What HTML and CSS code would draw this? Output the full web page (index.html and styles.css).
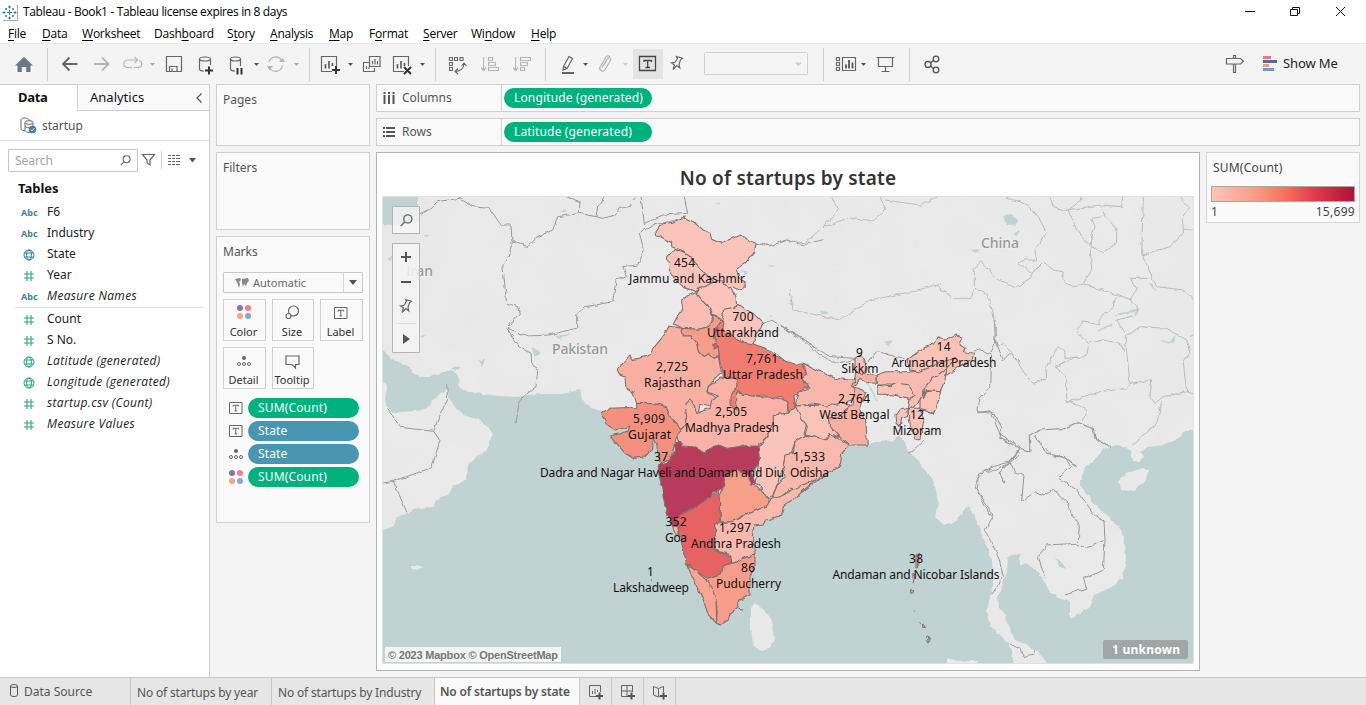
FILE: index.html
```html
<!DOCTYPE html>
<html lang="en">
<head>
<meta charset="utf-8">
<title>Tableau - Book1</title>
<link rel="stylesheet" href="styles.css">
</head>
<body>
<svg class="defs" width="0" height="0">
  <defs>
    <symbol id="globe" viewBox="0 0 12 12"><g fill="none" stroke="currentColor" stroke-width="1"><circle cx="6" cy="6" r="5"/><ellipse cx="6" cy="6" rx="2.4" ry="5"/><path d="M1.4 4h9.2M1.4 8h9.2"/></g></symbol>
    <symbol id="hash" viewBox="0 0 12 12"><path d="M4 1v10M8 1v10M1 4h10M1 8h10" fill="none" stroke="currentColor" stroke-width="1.1"/></symbol>
    <symbol id="tbox" viewBox="0 0 14 12"><path d="M.5.5h12.5v11H.5zM4 4.5V3.3h5.6v1.2M6.8 3.3v5.6M5.4 8.9h2.8" fill="none" stroke="#666"/></symbol>
    <symbol id="dots" viewBox="0 0 14 14"><circle cx="3" cy="3" r="3" fill="#8a739b"/><circle cx="11" cy="3" r="3" fill="#fa7a8c"/><circle cx="3" cy="11" r="3" fill="#f3a683"/><circle cx="11" cy="11" r="3" fill="#84a7cf"/></symbol>
    <symbol id="detail" viewBox="0 0 14 12"><circle cx="7" cy="3" r="2" fill="#666"/><g fill="none" stroke="#666"><circle cx="2" cy="9" r="1.5"/><circle cx="7" cy="9" r="1.5"/><circle cx="12" cy="9" r="1.5"/></g></symbol>
    <symbol id="lens" viewBox="0 0 12 12"><g fill="none" stroke="#666" stroke-width="1.2"><circle cx="7.2" cy="4.6" r="3.8"/><path d="M4.4 7.4L.8 11"/></g></symbol>
    <symbol id="pin" viewBox="0 0 14 16"><path d="M6.500 1.500l6 1.800-2 1.500-1.500 4.500.8 3.700-3-2.500L3 14.500 4.500 10 1.500 7.800l3.500-.5 2.500-4z" fill="none" stroke="#666" stroke-width="1.200"/></symbol>
  </defs>
</svg>

<header class="titlebar">
  <svg class="logo" width="16" height="17" viewBox="0 0 16 17"><path d="M15.500 1v15.500H1" fill="none" stroke="#aaa"/><g stroke="#2f7fae" stroke-width="1"><path d="M7.500 6v5M5 8.500h5M7.500 1.500v3M6 3h3M7.500 12.500v3M6 14h3M.5 8.500h3M2 7v3M11.500 8.500h3M13 7v3M4 4v2M3 5h2M11 4v2M10 5h2M4 11v2M3 12h2M11 11v2M10 12h2"/></g></svg>
  <span class="apptitle">Tableau - Book1 - Tableau license expires in 8 days</span>
  <svg class="winbtns" width="130" height="22" viewBox="1236 0 130 22"><g fill="none" stroke="#111"><path d="M1245 10.500h10M1290.500 8.500h7v6h-7zM1292.500 8V6.500h7v6H1298M1336 6l9 9M1345 6l-9 9"/></g></svg>
</header>
<nav class="menubar">
  <span style="width:34px"><u>F</u>ile</span><span style="width:40px"><u>D</u>ata</span><span style="width:72px"><u>W</u>orksheet</span><span style="width:73px">Dash<u>b</u>oard</span><span style="width:43px">S<u>t</u>ory</span><span style="width:59px"><u>A</u>nalysis</span><span style="width:40px"><u>M</u>ap</span><span style="width:54px">F<u>o</u>rmat</span><span style="width:48px"><u>S</u>erver</span><span style="width:60px">Wi<u>n</u>dow</span><span><u>H</u>elp</span>
</nav>

<div class="toolbar">
  <svg width="47" height="37" viewBox="0 44 47 37"><path d="M24 57l9 8.500h-2.500V72h-4.300v-5h-4.400v5h-4.300v-6.500H15z" fill="#6b7784"/></svg>
  <svg class="grp" width="262" height="37" viewBox="47 44 262 37">
    <g fill="none" stroke="#666" stroke-width="1.800"><path d="M77.500 64H63M69.500 57.500L63 64l6.500 6.500"/><path stroke="#b5b5b5" d="M94 64h14.500M102 57.500l6.500 6.500-6.500 6.500"/></g>
    <g fill="none" stroke="#b5b5b5" stroke-width="1.200"><path d="M132 67.500h-5a3.800 3.800 0 0 1 0-7.500h10M134.500 57l3 3-3 3M139 60.500a3.500 3.500 0 0 1-1.500 7h-4"/><path d="M269 62a7 7 0 0 1 12.500-2M282.500 65.500a7 7 0 0 1-12.500 3"/></g>
    <path d="M279 62h6l-2.500-4zM267 66h6l-3.500 4.500z" fill="#b5b5b5"/>
    <path d="M150 63h5l-2.500 3zM294 63h5l-2.500 3z" fill="#aaa"/><path d="M254 63h5l-2.500 3z" fill="#555"/>
    <g fill="none" stroke="#666" stroke-width="1.200"><path d="M166.500 56.500h15v15h-15zM169.500 71v-4.500h7.500V71M172 68.500V71"/><path d="M199.500 59v10c0 1.200 2 2 4.500 2M210.500 59v6M230.500 59v10c0 1.200 2 2 4.500 2M240.500 59v7"/><ellipse cx="205" cy="59" rx="5.500" ry="2"/><ellipse cx="235.500" cy="59" rx="5" ry="2"/></g>
    <path d="M205 70.500h8M209 66.500v8M237.500 68v6.500M241.500 68v6.500" stroke="#333" stroke-width="2"/>
  </svg>
  <svg class="grp" width="126" height="37" viewBox="309 44 126 37">
    <g fill="none" stroke="#666" stroke-width="1.200"><path d="M332 71.500h-10.500v-15h15V66M404 71.500h-10.500v-15h15V66M369 62.500h-5.500v9h11V68M369.500 56.500h10.500v10h-10.500z"/></g>
    <path d="M325.500 64v4.500M329 61v7.500M332.500 63v3M397.500 64v4.500M401 61v7.500M404.500 63v3" stroke="#555" stroke-width="1.600"/><path d="M366.500 66v3M369 67v2M372.500 61v3.500M375 59v5.500M377.500 61v3.500" stroke="#666" stroke-width="1.200"/>
    <path d="M332 70h8M336 66v8M404 67l7 7M411 67l-7 7" stroke="#333" stroke-width="2"/>
    <path d="M348 63h5l-2.500 3zM420 63h5l-2.500 3z" fill="#555"/>
  </svg>
  <svg class="grp" width="110" height="37" viewBox="435 44 110 37">
    <g fill="none" stroke="#666" stroke-width="1.100"><path d="M449.500 57.500h3v3h-3zM454.500 57.500h3v3h-3zM460 57.500h3v3h-3zM449.500 62.500h3v3h-3zM449.500 67.500h3v3h-3zM464 63.500c0 5-4 8-9 8M461.500 66l2.500-3 2.500 3M458 68.500l-3 3 3 2.500"/></g>
    <g fill="none" stroke="#b5b5b5" stroke-width="1.200"><path d="M483.500 57v13M481 67.500l2.500 3 2.500-3M488.500 57.500h4v3h-4zM488.500 62.500h7v3h-7zM488.500 67.500h10v3h-10zM515.500 57v13M513 67.500l2.500 3 2.500-3M520.500 57.500h10v3h-10zM520.500 62.500h7v3h-7zM520.500 67.500h4v3h-4z"/></g>
  </svg>
  <svg class="grp" width="278" height="37" viewBox="545 44 278 37">
    <path d="M633 49h30v30h-30z" fill="#e3e3e3"/>
    <g fill="none" stroke="#666" stroke-width="1.200"><path d="M569 56.500l3.500 2-5.500 10-3.500-2zM563.500 66.500l-.5 3.500 4-1.500"/><path d="M562 73h12" stroke-width="2"/><path stroke="#b5b5b5" d="M602 67.500l5.500-9a1.700 1.700 0 0 1 3 2l-5.500 9a2.800 2.800 0 0 1-5-2.500l5.500-9a2.500 2.500 0 0 1 4.500-1M604 65l3-5"/></g>
    <g fill="none" stroke="#444" stroke-width="1.300"><path d="M639.500 56.500h16v14h-16zM644 62v-1.500h7.500V62M647.700 60.500v7M645.500 67.500h4.500"/></g>
    <use href="#pin" x="670" y="55" width="14" height="16"/>
    <rect x="704.500" y="52.500" width="103" height="22" rx="1" fill="#f5f5f5" stroke="#d0d0d0"/>
    <path d="M583 63h5l-2.500 3z" fill="#555"/><path d="M623 63h5l-2.500 3zM795 62.500h7l-3.500 4z" fill="#ccc"/>
  </svg>
  <svg class="grp" width="86" height="37" viewBox="823 44 86 37">
    <g fill="none" stroke="#666" stroke-width="1.200"><path d="M836.500 57.500h3v3h-3zM836.500 62.500h3v3h-3zM836.500 67.500h3v3h-3zM842.500 57.500h13v13h-13zM876.500 57.500h18M878.500 58v8.500h14V58M885.500 66.500V71M881.500 71.500h8"/></g>
    <path d="M846 64.500v4M849 60v8.500M852.500 62.500v6" stroke="#555" stroke-width="1.800"/><path d="M861 63h5l-2.500 3z" fill="#555"/>
  </svg>
  <svg class="grp" width="40" height="37" viewBox="909 44 40 37"><g fill="none" stroke="#555" stroke-width="1.300"><circle cx="928" cy="64.500" r="3"/><circle cx="936" cy="59" r="2.800"/><circle cx="936" cy="70" r="2.800"/><path d="M930.500 63l3-2.500M930.500 66l3 2.500"/></g></svg>
  <div class="showme">
    <svg width="56" height="37" viewBox="1224 44 56 37"><path d="M1226.500 58.500h14l3 2.700-3 2.800h-14zM1233.500 58v-2.500h2v2.500M1233.500 64v8.500h2V64" fill="none" stroke="#666" stroke-width="1.200"/><path d="M1263 56h8v3h-8z" fill="#e8798a"/><path d="M1263 60h14v3h-14z" fill="#5b6591"/><path d="M1263 64h6v3h-6z" fill="#f0a06c"/><path d="M1263 68h11v3h-11z" fill="#6b9bd1"/></svg>
    <span>Show Me</span>
  </div>
</div>

<main class="work">
  <aside class="side">
    <div class="sidetabs"><b>Data</b><div><span>Analytics</span><svg width="8" height="12" viewBox="0 0 8 12"><path d="M6.500 1.500L2 6l4.500 4.500" fill="none" stroke="#555" stroke-width="1.200"/></svg></div></div>
    <div class="source"><svg width="17" height="17" viewBox="0 0 17 17"><g fill="none" stroke="#666"><path d="M1 3v8.500C1 13 3 13.500 5 14M9.500 3.500C9 .2 1 .2 1 3M5 6v7c0 2 4 3 6 2M13 6v3"/><ellipse cx="9" cy="5.500" rx="4" ry="1.800"/><path d="M5 9c1 2 4 2 6 1"/></g><circle cx="12.500" cy="12.500" r="3.800" fill="#3a80a8"/><path d="M10.700 12.500l1.300 1.300 2.300-2.500" fill="none" stroke="#fff"/></svg><span>startup</span></div>
    <div class="searchrow"><div class="search"><span>Search</span><svg width="11" height="11"><use href="#lens"/></svg></div>
      <svg width="62" height="22" viewBox="140 149 62 22"><path d="M142.500 154.500h12l-4.500 5.500v5l-3-2v-3z" fill="none" stroke="#666" stroke-width="1.200"/><path d="M161.500 151v18" stroke="#ccc"/><path d="M168 155.500h3m1 0h3m1 0h4M168 158.500h3m1 0h3m1 0h4M168 161.500h3m1 0h3m1 0h4M168 164.500h3m1 0h3m1 0h4" stroke="#666"/><path d="M189 158h7l-3.500 4.500z" fill="#555"/></svg></div>
    <h2>Tables</h2>
    <ul class="fields">
      <li><em class="abc">Abc</em>F6</li><li><em class="abc">Abc</em>Industry</li>
      <li><svg class="dim"><use href="#globe"/></svg>State</li>
      <li><svg class="mea"><use href="#hash"/></svg>Year</li>
      <li><em class="abc">Abc</em><i>Measure Names</i></li>
    </ul>
    <ul class="fields second">
      <li><svg class="mea"><use href="#hash"/></svg>Count</li><li><svg class="mea"><use href="#hash"/></svg>S No.</li>
      <li><svg class="mea"><use href="#globe"/></svg><i>Latitude (generated)</i></li>
      <li><svg class="mea"><use href="#globe"/></svg><i>Longitude (generated)</i></li>
      <li><svg class="mea"><use href="#hash"/></svg><i>startup.csv (Count)</i></li>
      <li><svg class="mea"><use href="#hash"/></svg><i>Measure Values</i></li>
    </ul>
  </aside>

  <section class="cards">
    <div class="card pages">Pages</div>
    <div class="card filters">Filters</div>
    <div class="card marks">Marks
      <div class="marktype"><svg width="14" height="10" viewBox="0 0 14 10"><path d="M0 1l5-1 1 2-2 2 1 2-1 4-1-3-1-3zM7 1l6-1 1 3-2 2-1 3-2-2-1 3-1-4z" fill="#888"/></svg><span>Automatic</span><div><svg width="8" height="5"><path d="M0 0h8L4 5z" fill="#555"/></svg></div></div>
      <div class="btns">
        <div><svg width="14" height="14"><use href="#dots"/></svg>Color</div>
        <div><svg width="15" height="15" viewBox="0 0 15 15"><g fill="none" stroke="#666" stroke-width="1.200"><circle cx="8.500" cy="6" r="5"/><circle cx="3.500" cy="11" r="2.500" fill="#fafafa"/></g></svg>Size</div>
        <div><svg class="low" width="14" height="12"><use href="#tbox"/></svg>Label</div>
        <div><svg class="low" width="14" height="12"><use href="#detail"/></svg>Detail</div>
        <div><svg class="low" width="15" height="14" viewBox="0 0 15 14"><path d="M1 1h13v8.500h-3.500v3.500L7 9.500H1z" fill="none" stroke="#666" stroke-width="1.200"/></svg>Tooltip</div>
      </div>
      <div class="pills">
        <div><svg width="14" height="12"><use href="#tbox"/></svg><span class="pill g">SUM(Count)</span></div>
        <div><svg width="14" height="12"><use href="#tbox"/></svg><span class="pill b">State</span></div>
        <div><svg width="14" height="12"><use href="#detail"/></svg><span class="pill b">State</span></div>
        <div><svg width="14" height="14"><use href="#dots"/></svg><span class="pill g">SUM(Count)</span></div>
      </div>
    </div>
  </section>

  <section class="content">
    <div class="shelf"><div class="shelfname"><svg width="12" height="12"><path d="M1.500 0v2m0 1v9M6 0v2m0 1v9M10.500 0v2m0 1v9" stroke="#555" stroke-width="2"/></svg>Columns</div><span class="pill g wide">Longitude (generated)</span></div>
    <div class="shelf"><div class="shelfname"><svg width="12" height="12"><path d="M0 2h2m1 0h9M0 6h2m1 0h9M0 10h2m1 0h9" stroke="#555" stroke-width="1.800"/></svg>Rows</div><span class="pill g wide">Latitude (generated)</span></div>
    <div class="lower">
      <div class="view">
        <h1>No of startups by state</h1>
        <svg class="map" width="812" height="468" viewBox="382 196 812 468">
          <defs>
            <filter id="rough" x="382" y="196" width="812" height="468" filterUnits="userSpaceOnUse"><feTurbulence type="fractalNoise" baseFrequency=".17" numOctaves="1" seed="4"/><feDisplacementMap in="SourceGraphic" scale="4.500" xChannelSelector="R" yChannelSelector="G"/></filter>
            <filter id="relief" x="382" y="196" width="812" height="468" filterUnits="userSpaceOnUse"><feTurbulence type="fractalNoise" baseFrequency=".02" numOctaves="2" seed="8"/><feColorMatrix values="0 0 0 0 .5  0 0 0 0 .5  0 0 0 0 .5  .5 0 0 0 -.2"/></filter>
          </defs>
          <rect x="382" y="196" width="812" height="468" fill="#eaeaea"/>
          <rect x="382" y="196" width="812" height="468" filter="url(#relief)" opacity=".22"/>
          <g filter="url(#rough)">
            <g fill="#c1d2d2">
              <path d="M375 190H418V222L400 226 375 223zM375 350L384 352 392 359 408 366 412 370 414 374 427 378 443 372 452 370 458 375 459 386 463 390 475 393 500 396 516 397 540 394 562 394 580 390 582 400 592 408 602 411 636 407 665 430 690 470 710 520 740 520 770 480 820 450 855 440 868 444 885 440 893 442 900 434 905 444 909 452 916 458 925 470 932 478 936 490 938 503 935 517 943 524 952 524 960 515 968 505 974 515 980 530 986 545 992 560 993 580 991 595 986 612 990 625 1003 638 1012 650 1014 670H375V533L395 526 395 521 400 516 408 513 419 508 434 507 436 500 449 495 453 486 466 480 467 465 475 458 487 450 493 434 489 428 480 420 466 416 455 407 449 398 447 388 437 396 427 408 417 411 400 412 392 413 386 405 387 385 375 376z"/>
              <path d="M1049 670L1043 656 1035 650 1025 644 1015 640 1010 628 1005 615 999 608 998 597 1003 583 1007 572 1008 558 1013 554 1020 555 1020 564 1030 565 1038 572 1043 580 1050 592 1058 598 1070 602 1070 618 1077 615 1088 608 1094 595 1110 588 1123 577 1126 560 1125 545 1121 530 1108 516 1095 505 1083 490 1080 482 1085 468 1098 457 1104 448 1118 445 1130 450 1132 462 1141 462 1143 455 1140 452 1148 447 1165 445 1180 437 1186 430 1200 430V670z"/>
              <path d="M1003 216l7-2 8 6-3 6-8-2zM970 250l10-1-4 4zM1014 233l6-2-3 5zM560 212l6-3-1 4zM387 259l6-5-2 7zM424 235h6l-4 2zM504 290l5 1-3 3zM555 336l16-2-11 5zM532 347l8 5-6 4zM479 361l6-1-3 8zM450 367l10 1-4 3zM420 336l5-1-2 4zM740 270l10 2-5 2zM769 265l6 1-4 1zM788 302l7 2-4 1zM820 310l8 3-6 2zM769 315l5 1-3 1zM884 342l9-3-3 7zM1160 340l10 2 6-8-2 8-8 2zM1055 558l8 6 3 5-7-3z"/>
              <path d="M1116 315l23-5M1098 331l14-7M1150 283l5 8M859 375l10 10 8 16" fill="none" stroke="#c1d2d2" stroke-width="1.500"/>
              <path d="M386 399l6 5 5-4-8-4zM715 202l6 1-3 2z"/>
            </g>
            <g fill="#e9e9e9">
              <path d="M751 608l4-5 8 5 9 12 3 18-4 9-10 3-8-5-2-17z"/>
              <path d="M1119 482l7-9 15-4 8 1-5 13-11 8-12-1zM947 658l12 3 13-1 10 4h-35zM411 566h12l-4 4-8-1zM412 370l18-1 12 1-16 5z"/>
            </g>
            <g fill="none" stroke="#b8b8b8" stroke-width=".9">
              <g transform="translate(940 190) scale(.33333)" stroke-width="2.800">
                <path d="M200 25L240 35 270 50 300 90 318 125 305 150 285 180 290 210 250 210 235 220 260 240 275 250 310 215 340 240 365 245 375 275 400 290 430 285 490 300 530 315 520 350 490 375 475 405 430 392 412 425 445 460 490 450 540 460 555 485M103 290L103 235 122 215 145 235 165 265 230 290 270 265 290 230M-20 280L40 325 90 325 105 295 140 310 160 370 170 470 190 460 210 480 260 560 280 580 320 565 318 530 355 470 375 485 375 505 440 500 445 470M345 530L380 560 380 630 440 660 430 690M345 530L410 500M380 635L440 620 480 605 560 595 570 580 555 440 600 410 680 415 740 450 750 490 730 520 740 605 670 620 645 640 630 620 635 570 570 580M665 635L650 700 580 765M385 60L410 120 450 165 455 240 430 280M380 60L480 45 495 80 530 115 530 160 490 185 455 170M485 45L545 50 548 20M330 25L340 50 380 62M425 0L425 30 385 60M455 85L465 110 455 140 450 165M455 85L490 80M610 20L605 190 640 270 650 290 730 300 760 330M605 195L690 170 730 130 728 90 745 50 720 20M730 118L760 120M570 265L630 265M570 265L590 295 570 330 595 350 590 375 530 390 560 435M530 312L575 330M750 440L770 430M740 605L770 615"/>
              </g>
              <path d="M757 244L772 245 786 240 805 243 823 227 838 211 832 197M823 227L850 218 872 222 886 210 880 197M790 290L793 310 840 320 870 300 910 292 940 284M885 200L920 205 936 197"/>
            </g>
            <g fill="none" stroke="#999" stroke-width="1">
              <g transform="translate(376 80) scale(.33333)" stroke-width="3">
                <path d="M130 402L160 388 185 365 250 355 290 380 340 385 375 435 405 435 408 485 400 530 380 555 385 600 392 670 425 680 430 700 393 745 455 768 520 765 570 752 602 745 602 705 625 680 660 675 710 665 720 600 755 590 740 560 785 555 805 510 790 460 830 435 880 425 930 410M408 485L455 500 480 475 530 450 545 410 610 400 660 410 680 415 720 405 730 385 760 380 780 350M610 400L612 365 570 350M660 410L665 380 685 350M795 350L805 430 860 405 935 400 925 350M393 745L425 795 465 820 468 860 485 870 480 920M480 920L430 960 420 1030"/>
              </g>
              <g transform="translate(376 370) scale(.33333)" stroke-width="3"><path d="M35 118L75 172 173 184 195 125 215 90 212 40M173 184L192 212 167 293 52 334 15 340M52 334L94 430"/></g>
              <g transform="translate(590 200) scale(.33333)" stroke-width="3"><path d="M520 370L545 360 600 395 650 430 690 465 740 490 795 478M498 130L540 138 590 120 640 135 700 118"/><path d="M570 375L630 410 680 445"/></g>
              <g transform="translate(780 320) scale(.33333)" stroke-width="3"><path d="M0 15L60 50 110 85 150 110 225 115M258 130L290 95 340 105 385 122M580 95L600 85 615 98 635 105 632 200 600 235 592 275 635 280 660 345 720 380M720 388L690 425 640 440 600 460 585 500 635 595M645 0L645 60 630 100M645 60L670 120 690 100 720 130M432 360L400 390 385 400"/></g>
              <g transform="translate(940 190) scale(.33333)" stroke-width="3.500"><path d="M112 668L155 662 185 710 180 745 240 775 270 785 268 735 300 720 380 715 415 698 460 715 465 745 512 770M285 735L320 790 380 805 410 830M240 775L210 810 180 850 195 880"/></g>
              <g transform="translate(820 450) scale(.33333)" stroke-width="3"><path d="M470 118L480 80 490 65 530 60 570 38 600 10 590 0M570 38L585 70 612 75 605 155 645 125 670 138 700 118 745 160 755 195 778 225 775 275M470 118L510 180 518 205 495 240 520 290 535 320 550 380 515 435M680 0L700 20 735 20 752 50 715 82 770 120 820 190 852 215 855 270 850 360 790 385 800 415 735 435M675 385L655 320 680 285 770 280 795 295 850 272M570 582L605 600 610 620 640 612 645 598"/></g>
            </g>
            <g transform="translate(590 200) scale(.33333)" fill="#fbc4bb" stroke="#7c706f" stroke-width="3.200">
              <path d="M198 95L215 72 248 67 280 52 310 65 340 90 360 100 365 118 392 130 420 118 450 105 468 112 478 122 498 130 494 155 480 172 465 190 442 205 450 235 465 245 466 262 450 272 430 262 415 263 390 240 360 235 330 205 300 170 270 150 262 148 245 140 245 128 215 112 200 108z"/>
              <path d="M262 148L248 155 232 175 238 210 250 228 262 248 280 262 305 270 318 276 328 262 345 260 372 245 360 235 330 205 300 170 270 150z"/>
              <path d="M328 262L345 260 372 245 390 240 415 263 425 265 438 290 440 320 400 328 400 362 372 345 358 325 340 305 318 285z"/>
              <path d="M318 278L285 290 275 300 278 330 262 350 250 372 275 385 325 388 350 382 365 370 368 345 358 325 340 305 328 290z" fill="#fabdb3"/>
              <path d="M275 385L325 388 350 382 370 362 368 345 385 352 395 362 378 385 370 410 382 425 385 440 388 470 372 475 355 460 340 470 325 455 318 425 300 408 280 408z" fill="#f79c88"/>
              <path d="M400 328L430 322 450 315 470 330 490 340 520 370 500 400 490 432 460 428 430 410 400 395 395 362 400 345z"/>
              <path d="M235 378L275 385 280 408 300 408 318 425 325 455 340 470 355 460 372 475 385 470 390 500 395 515 375 535 355 560 350 575 375 590 365 620 330 610 325 640 305 645 290 650 285 680 270 690 262 672 240 650 228 620 200 612 140 610 128 575 108 562 105 532 90 525 82 510 120 465 130 478 175 468 195 440 222 405z" fill="#f9b0a3"/>
              <path d="M440 535L445 560 428 572 440 578 490 588 545 592 590 600 595 640 550 645 550 670 530 710 510 730 505 745 460 735 420 750 385 735 345 758 305 745 270 740 262 715 270 690 285 680 290 650 285 610 300 600 312 615 320 640 360 625 365 600 385 588 352 575 355 560 390 535 420 530z" fill="#f9b2a5"/>
              <path d="M380 385L395 362 402 370 398 390 425 405 455 425 490 432 540 450 580 478 615 492 640 492 640 505 652 522 640 530 645 552 658 560 640 565 612 590 616 625 605 642 595 638 592 605 570 590 545 592 525 585 490 588 460 582 440 575 440 610 440 630 420 615 420 590 428 572 445 560 440 535 420 530 400 535 398 510 390 490 385 440 372 410z" fill="#f37c6f"/>
              <path d="M368 432L380 430 383 442 372 447z" fill="#e25255"/>
              <path d="M35 640L55 625 140 622 140 610 200 612 228 620 240 650 262 672 270 690 258 715 250 750 240 780 215 790 205 770 200 735 190 710 188 745 165 770 130 775 105 760 62 708 110 695 122 680 75 690 48 672z" fill="#f58f7e"/>
              <path d="M595 640L620 618 640 640 652 665 640 710 615 725 605 760 585 770 580 800 565 850 545 890 525 890 508 855 495 850 500 820 508 785 505 745 530 710 550 670 550 645z"/>
            </g>
            <g transform="translate(780 320) scale(.33333)" fill="#fbc2b8" stroke="#7c706f" stroke-width="3.200">
              <path d="M75 345L140 360 150 340 210 375 185 400 182 430 170 445 120 475 60 520 30 505 5 530 -25 535 -10 500 15 470 10 440 15 405 40 400 45 365z" fill="#fab9ae"/>
              <path d="M45 258L140 255 185 248 215 258 175 290 145 295 150 320 175 335 178 352 150 340 140 358 75 345 82 320 60 285z"/>
              <path d="M70 130L110 150 165 175 210 180 230 178 218 200 228 215 215 240 185 250 140 258 95 252 45 258 55 215 90 203 65 172 80 162z" fill="#fab8ad"/>
              <path d="M228 175L230 150 258 160 292 165 290 190 268 188 240 178 222 200 235 205 258 215 250 240 240 270 258 310 262 375 210 375 175 345 150 320 145 295 175 290 215 258 220 235 228 210 218 195z" fill="#f9b0a3"/>
              <path d="M225 150L225 115 240 105 255 120 258 150 245 162z"/>
              <path d="M292 165L320 155 400 155 450 140 500 120 530 112 500 145 460 175 430 210 420 240 400 262 385 268 390 235 405 225 385 195 330 195 292 195z" fill="#fabcb2"/>
              <path d="M380 120L430 85 465 70 475 50 500 60 530 45 548 52 540 75 555 85 550 95 583 100 575 120 540 140 500 165 495 150 530 112 450 140 415 155 390 150z"/>
              <path d="M292 195L330 200 350 190 385 195 405 225 390 235 340 225 295 222zM500 145L495 180 480 215 440 212 430 235 435 205 460 175zM430 218L455 212 482 215 470 260 460 282 420 268 420 240zM345 285L360 270 385 265 382 290 365 295 360 320 347 305zM388 265L420 265 432 300 420 355 405 360 395 330 388 300z"/>
            </g>
            <g transform="translate(590 400) scale(.33333)" fill="#fbb9ae" stroke="#7c706f" stroke-width="3.200">
              <path d="M250 130L272 125 275 138 310 140 345 158 370 140 388 135 410 145 460 138 505 138 508 185 500 200 485 215 495 250 482 255 475 225 440 210 405 232 400 262 375 275 340 305 310 325 270 345 262 375 250 378 240 365 225 320 215 260 205 215 205 195 235 190 245 165 260 150z" fill="#b83a5b"/>
              <path d="M405 232L440 210 475 225 482 255 500 258 530 290 545 300 530 318 490 335 450 352 425 365 392 365 388 290 400 262z" fill="#f89f8a"/>
              <path d="M392 368L425 365 490 335 530 318 545 295 570 290 620 265 680 235 660 255 620 290 580 320 575 345 530 360 520 372 492 375 487 410 495 440 495 465 460 475 445 485 425 490 425 465 400 458 375 450 370 410 380 395 372 372z"/>
              <path d="M388 272L392 310 388 368 372 372 380 395 370 410 370 450 400 460 425 470 428 485 405 495 390 525 355 537 320 515 290 492 280 450 268 400 262 360 270 345 310 325 340 305z" fill="#e66263"/>
              <path d="M248 380L262 378 268 405 255 405z"/>
              <path d="M495 465L495 500 480 530 480 585 450 600 440 625 420 640 415 660 390 676 378 670 382 640 378 600 360 560 345 540 390 525 405 495 430 490 460 475z" fill="#f89d89"/>
              <path d="M290 492L320 515 345 537 365 560 378 600 380 670 355 645 340 600 315 550z" fill="#f9a594"/>
              <path d="M183 539l2 3M442 628l18 2" fill="none"/>
            </g>
            <g transform="translate(820 450) scale(.33333)" fill="#e9a59e" stroke="#7c706f" stroke-width="3"><path d="M288 315l10-5-2 25-8 20zM278 370l10 5-6 22zM272 418l6 4-3 10-4-6zM285 482l2 3M299 517l3 4M310 522l6 4-4 8zM320 555l4 8 7 10-6 2z"/></g>
          </g>
          <g class="place"><text x="406" y="276" textLength="27">Iran</text><text x="552" y="354" textLength="56">Pakistan</text><text x="981" y="248" textLength="38">China</text><text x="712" y="432" opacity=".12" textLength="30">India</text></g>
          <g class="lab">
            <text x="684.500" y="267" textLength="21">454</text><text x="687" y="283" textLength="116">Jammu and Kashmir</text>
            <text x="743" y="321" textLength="21">700</text><text x="743" y="337" textLength="72">Uttarakhand</text>
            <text x="672" y="371" textLength="32">2,725</text><text x="672.500" y="387" textLength="57">Rajasthan</text>
            <text x="762" y="363" textLength="32">7,761</text><text x="763" y="379" textLength="80">Uttar Pradesh</text>
            <text x="859.500" y="357">9</text><text x="860" y="373" textLength="37">Sikkim</text>
            <text x="943.500" y="351" textLength="14">14</text><text x="944" y="367" textLength="105">Arunachal Pradesh</text>
            <text x="854" y="403" textLength="32">2,764</text><text x="854.500" y="419" textLength="70">West Bengal</text>
            <text x="917" y="419" textLength="14">12</text><text x="917" y="435" textLength="49">Mizoram</text>
            <text x="731" y="416" textLength="32">2,505</text><text x="732" y="432" textLength="94">Madhya Pradesh</text>
            <text x="649" y="423" textLength="32">5,909</text><text x="649.500" y="439" textLength="43">Gujarat</text>
            <text x="661" y="461" textLength="14">37</text><text x="662" y="477" textLength="244">Dadra and Nagar Haveli and Daman and Diu</text>
            <text x="809" y="461" textLength="32">1,533</text><text x="809.500" y="477" textLength="39">Odisha</text>
            <text x="676" y="526" textLength="21">352</text><text x="676" y="542" textLength="22">Goa</text>
            <text x="735" y="532" textLength="32">1,297</text><text x="736" y="548" textLength="90">Andhra Pradesh</text>
            <text x="748" y="572" textLength="14">86</text><text x="748.500" y="588" textLength="65">Puducherry</text>
            <text x="650.500" y="576">1</text><text x="651" y="592" textLength="76">Lakshadweep</text>
            <text x="916" y="563" textLength="14">38</text><text x="916" y="579" textLength="167">Andaman and Nicobar Islands</text>
          </g>
          <g fill="#f5f5f5" fill-opacity=".85" stroke="#b4b4b4"><path d="M392.500 206.500h27v27h-27zM392.500 243.500h27v109h-27z"/></g>
          <use href="#lens" x="400" y="214" width="13" height="13"/>
          <path d="M401 257h10M406 252v10M401 282h10" stroke="#555" stroke-width="2"/><use href="#pin" x="399" y="298" width="14" height="16"/><path d="M396 323.500h20" stroke="#ddd"/><path d="M403 334l7 5-7 5z" fill="#555"/>
          <rect x="385" y="647" width="176" height="15" fill="#f8f8f8" fill-opacity=".9"/><text class="attr" x="388" y="659" textLength="170">© 2023 Mapbox © OpenStreetMap</text>
          <rect x="1103" y="640" width="85" height="19" rx="2" fill="#a1a6a6"/><text class="unknown" x="1112" y="654" textLength="68">1 unknown</text>
          <rect x="382.500" y="196.500" width="811" height="467" fill="none" stroke="#e0e0e0"/>
        </svg>
      </div>
      <div class="legend"><div>SUM(Count)</div><div class="ramp"></div><div class="range"><span>1</span><span>15,699</span></div></div>
    </div>
  </section>
</main>

<footer class="sheets">
  <div class="ds"><svg width="8" height="13" viewBox="0 0 8 13"><path d="M.5 2v9c0 2 7 2 7 0V2c0-2-7-2-7 0s7 2 7 0" fill="none" stroke="#555"/></svg>Data Source</div>
  <div class="s1">No of startups by year</div>
  <div class="s2">No of startups by Industry</div>
  <div class="s3">No of startups by state</div>
  <div class="ic"><svg width="16" height="16" viewBox="0 0 16 16"><path d="M8 12.500H1.500v-11h11V8M4.500 7v3M7 5v5M9.500 6v2" fill="none" stroke="#666"/><path d="M8 12h7M11.500 8.500v7" stroke="#555" stroke-width="2"/></svg></div>
  <div class="ic"><svg width="16" height="16" viewBox="0 0 16 16"><path d="M8 12.500H1.500v-11h11V8M1.500 7h11M7 1.500v11" fill="none" stroke="#666"/><path d="M8 12h7M11.500 8.500v7" stroke="#555" stroke-width="2"/></svg></div>
  <div class="ic"><svg width="16" height="16" viewBox="0 0 16 16"><path d="M8 12l-1.500 1-5-2V2.500l5 2 5-2V8M6.500 4.500v8" fill="none" stroke="#666"/><path d="M8 12h7M11.500 8.500v7" stroke="#555" stroke-width="2"/></svg></div>
</footer>
</body>
</html>
```
FILE: styles.css
```css
* { box-sizing: border-box; }
body { margin: 0; width: 1366px; height: 705px; overflow: hidden; background: #fff; display: flex; flex-direction: column; font: 12px/16px "Noto Sans", "Open Sans", sans-serif; color: #333; }
svg { display: block; flex: none; }
.defs { position: absolute; }
.titlebar { height: 23px; display: flex; align-items: center; color: #000; }
.logo { margin-left: 2px; margin-top: 1px; }
.apptitle { margin-left: 5px; font: 12px/22px "Open Sans", sans-serif; letter-spacing: -0.35px; }
.winbtns { margin-left: auto; }
.menubar { height: 20px; display: flex; padding-left: 8px; font: 12px/22px "Open Sans", sans-serif; letter-spacing: -0.22px; color: #000; white-space: nowrap; }
.menubar u { text-underline-offset: 2px; }
.toolbar { height: 38px; border-top: 1px solid #eaeaea; background: #f4f4f4; display: flex; }
.toolbar > svg + .grp { background: linear-gradient(#d0d0d0, #d0d0d0) 0 4px / 1px 33px no-repeat; }
.showme { margin-left: auto; width: 142px; display: flex; align-items: center; color: #222; font-size: 13px; }
.showme span { margin-left: 3px; letter-spacing: -0.1px; }

.work { height: 596px; background: #f4f4f4; display: flex; padding-top: 3px; }
.side { width: 210px; background: #fff; border-top: 1px solid #d0d0d0; border-right: 1px solid #d0d0d0; }
.sidetabs { height: 26px; display: flex; font-size: 13px; line-height: 25px; color: #111; }
.sidetabs b { width: 77px; padding-left: 18px; letter-spacing: -0.3px; }
.sidetabs div { flex: 1; display: flex; align-items: center; justify-content: space-between; padding: 0 6px 0 12px; border-left: 1px solid #d0d0d0; border-bottom: 1px solid #d0d0d0; background: #fafafa; }
.source { height: 30px; border-bottom: 1px solid #e0e0e0; display: flex; align-items: center; gap: 5px; padding-left: 20px; font-size: 12px; color: #555; }
.searchrow { display: flex; gap: 2px; padding: 8px 0 0 8px; }
.search { width: 130px; height: 23px; border: 1px solid #c4c4c4; border-radius: 1px; display: flex; justify-content: space-between; align-items: center; padding: 0 6px; color: #a5a5a5; }
h2 { margin: 5px 0 2px 18px; font-size: 13px; line-height: 22px; color: #111; }
.fields { list-style: none; margin: 0 6px 0 15px; padding: 0; color: #222; }
.fields li { height: 21px; line-height: 21px; display: flex; align-items: center; padding-left: 6px; }
.fields svg { width: 12px; height: 12px; margin: 2px 12px 0 2px; }
.fields i { font-family: "Open Sans", sans-serif; letter-spacing: .34px; }
.dim { color: #3a80a0; }
.mea { color: #2fa57e; }
.abc { width: 26px; font: bold 9px/21px "Noto Sans", sans-serif; color: #4a809b; padding-top: 1px; }
.second { border-top: 1px solid #dcdcdc; margin-top: 1px; }

.cards { width: 154px; margin-left: 6px; display: flex; flex-direction: column; gap: 6px; }
.card { background: #fafafa; border: 1px solid #d0d0d0; padding: 7px 6px 0; font-size: 12px; color: #555; }
.pages { height: 62px; }
.filters { height: 78px; }
.marks { height: 287px; }
.marktype { height: 21px; margin-top: 12px; border: 1px solid #c9c9c9; border-radius: 1px; display: flex; align-items: center; padding-left: 11px; color: #666; font-size: 11px; }
.marktype span { flex: 1; margin-left: 4px; }
.marktype div { width: 19px; align-self: stretch; border-left: 1px solid #d6d6d6; display: flex; align-items: center; justify-content: center; }
.btns { display: grid; grid-template-columns: 43px 42px 43px; gap: 6px; margin-top: 6px; }
.btns div { height: 42px; border: 1px solid #cfcfcf; padding: 5px 2px 0 0; display: flex; flex-direction: column; justify-content: space-between; align-items: center; font-size: 11px; line-height: 17px; color: #333; white-space: nowrap; }
.btns .low { margin-top: 2px; }
.pills { display: grid; gap: 3px; margin-top: 9px; }
.pills div { display: flex; height: 20px; align-items: center; padding-left: 6px; gap: 5px; }
.pill { width: 111px; height: 20px; border-radius: 10px; padding-left: 10px; color: #fff; font-size: 12px; line-height: 20px; letter-spacing: .15px; white-space: nowrap; }
.g { background: #00b180; }
.b { background: #4996b2; }

.content { margin-left: 6px; width: 984px; display: flex; flex-direction: column; gap: 6px; }
.shelf { height: 28px; border: 1px solid #d0d0d0; background: #fafafa; display: flex; align-items: center; }
.shelfname { width: 125px; height: 26px; border-right: 1px solid #d0d0d0; display: flex; align-items: center; gap: 7px; padding-left: 6px; color: #555; }
.wide { width: 148px; margin-left: 2px; }
.lower { display: flex; gap: 6px; align-items: flex-start; }
.view { width: 824px; height: 519px; background: #fff; border: 1px solid #b4b4b4; padding: 8px 5px 0; }
h1 { margin: 0; height: 35px; font-size: 19px; line-height: 34px; font-weight: 600; letter-spacing: .2px; text-align: center; color: #333; }
.place { font: 500 14px "Noto Sans", sans-serif; fill: #999; stroke: #ededed; stroke-width: 2px; paint-order: stroke; }
.lab { font: 12px "Noto Sans", sans-serif; fill: #111; text-anchor: middle; }
.attr { font: bold 11px "Liberation Sans", Arial, sans-serif; fill: #777; }
.unknown { font: bold 12px "Noto Sans", sans-serif; fill: #fff; }
.legend { width: 154px; height: 71px; background: #fafafa; border: 1px solid #d6d6d6; padding: 7px 4px 0; color: #444; }
.legend > div:first-child { padding-left: 2px; letter-spacing: .2px; }
.ramp { height: 16px; margin-top: 10px; border: 1px solid #b0a3a0; background: linear-gradient(90deg, #fcc4ba, #fba08a 28%, #f16a59 55%, #e03c4b 72%, #ae123a); }
.range { display: flex; justify-content: space-between; margin-top: 2px; letter-spacing: .3px; }

.sheets { height: 28px; background: #e6e6e6; border-top: 1px solid #c6c6c6; display: flex; font-size: 12px; line-height: 29px; letter-spacing: -0.17px; color: #555; white-space: nowrap; }
.sheets > div { border-right: 1px solid #c9c9c9; padding-left: 6px; }
.sheets .ds { width: 131px; display: flex; align-items: center; gap: 6px; padding-left: 10px; letter-spacing: 0; }
.ds svg { margin-top: -2px; }
.sheets .s1 { width: 141px; }
.sheets .s2 { width: 163px; }
.sheets .s3 { width: 145px; background: #fafafa; font-weight: 600; line-height: 27px; padding-left: 5px; }
.sheets .ic { width: 32px; display: flex; align-items: center; padding-left: 8px; }
```
